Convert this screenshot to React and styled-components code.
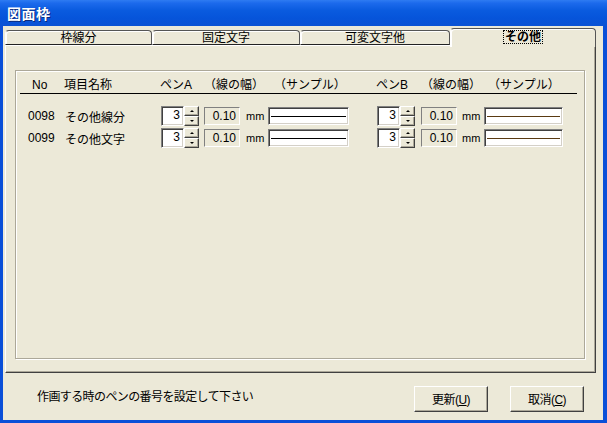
import React from 'react';
import styled, { createGlobalStyle } from 'styled-components';

const GlobalStyle = createGlobalStyle`
  html, body {
    margin: 0;
    padding: 0;
    background: #ECE9D8;
  }
  body {
    font-family: "Liberation Sans", "Noto Sans CJK JP", sans-serif;
    font-size: 12px;
    color: #000;
  }
`;

const FACE = '#ECE9D8';

const Window = styled.div`
  width: 607px;
  height: 423px;
  box-sizing: border-box;
  display: flex;
  flex-direction: column;
  background: #0A4FD8;
  padding: 0 4px 3px 3px;
  overflow: hidden;
`;

const TitleBar = styled.div`
  height: 26px;
  margin: 0 -4px 0 -3px;
  display: flex;
  align-items: center;
  padding-left: 7px;
  background: linear-gradient(#2E7BF2 0%, #1C6AEC 12%, #0A5BDF 40%, #0654DA 70%, #0A52D4 100%);
  color: #fff;
  font-weight: bold;
  font-size: 14px;
  letter-spacing: 0.5px;
  text-shadow: 1px 1px 0 #0A2A7A;
`;

const Body = styled.div`
  flex: 1;
  display: flex;
  flex-direction: column;
  background: ${FACE};
  padding: 2px 7px 0 2px;
`;

/* タブ */
const TabStrip = styled.div`
  display: flex;
  height: 17px;
  align-items: flex-end;
  position: relative;
  z-index: 1;
`;

const Tab = styled.div`
  flex: ${(p) => p.$w};
  box-sizing: border-box;
  height: ${(p) => (p.$active ? '19px' : '15px')};
  margin-bottom: ${(p) => (p.$active ? '-2px' : '0')};
  display: flex;
  align-items: center;
  justify-content: center;
  background: ${FACE};
  border-top: 1px solid #555;
  border-left: 1px solid #fff;
  border-right: 1px solid #555;
  border-bottom: ${(p) => (p.$active ? 'none' : '1px solid #222')};
  border-radius: 4px 4px 0 0;
  box-shadow: inset 1px 1px 0 #fff;
  font-weight: ${(p) => (p.$active ? 'bold' : 'normal')};
  line-height: 12px;
  white-space: nowrap;
`;

const FocusLabel = styled.span`
  outline: 1px dotted #000;
  outline-offset: 0;
  padding: 0 1px;
  margin-top: -3px;
`;

const Panel = styled.div`
  height: 328px;
  box-sizing: border-box;
  border-top: 1px solid #fff;
  border-left: 1px solid #fff;
  border-right: 1px solid #404040;
  border-bottom: 1px solid #404040;
  box-shadow: inset -1px -1px 0 #ACA899;
  padding: 24px 10px 13px 9px;
  display: flex;
`;

const GroupBox = styled.div`
  flex: 1;
  border: 1px solid #ACA899;
  box-shadow: inset 1px 1px 0 #fff, 1px 1px 0 #fff;
  padding: 7px 7px 0 4px;
`;

const Grid = styled.div`
  display: grid;
  grid-template-columns: 45px 96px 43px 41px 23px 109px 44px 40px 23px 79px;
  align-items: center;
`;

const HeadCell = styled.div`
  grid-column: ${(p) => p.$col};
  padding-left: ${(p) => p.$off || 0}px;
  margin-left: ${(p) => p.$neg || 0}px;
  white-space: nowrap;
  height: 15px;
  line-height: 15px;
`;

const HeadRule = styled.div`
  grid-column: 1 / -1;
  height: 0;
  border-top: 1px solid #000;
  margin-right: -14px;
  margin-bottom: 11px;
`;

const Cell = styled.div`
  padding-left: ${(p) => p.$off || 0}px;
  white-space: nowrap;
  height: 22px;
  display: flex;
  align-items: center;
`;

const SpinWrap = styled.div`
  display: flex;
  height: 20px;
`;

const SpinInput = styled.div`
  width: 23px;
  height: 20px;
  box-sizing: border-box;
  background: #fff;
  border-top: 1px solid #808080;
  border-left: 1px solid #808080;
  border-right: 1px solid #fff;
  border-bottom: 1px solid #fff;
  box-shadow: inset 1px 1px 0 #404040, inset -1px -1px 0 #D4D0C8;
  text-align: right;
  padding: 1px 3px 0 0;
  line-height: 15px;
`;

const SpinButtons = styled.div`
  width: 15px;
  display: flex;
  flex-direction: column;
`;

const SpinBtn = styled.div`
  height: 10px;
  box-sizing: border-box;
  background: ${FACE};
  border-top: 1px solid #fff;
  border-left: 1px solid #fff;
  border-right: 1px solid #404040;
  border-bottom: 1px solid #404040;
  box-shadow: inset -1px -1px 0 #ACA899;
  display: flex;
  align-items: center;
  justify-content: center;

  &::after {
    content: '';
    width: 0;
    height: 0;
    border-left: 2px solid transparent;
    border-right: 2px solid transparent;
    ${(p) => (p.$up ? 'border-bottom: 2px solid #000;' : 'border-top: 2px solid #000;')}
  }
`;

const ReadBox = styled.div`
  width: 36px;
  height: 18px;
  box-sizing: border-box;
  background: ${FACE};
  border-top: 1px solid #808080;
  border-left: 1px solid #808080;
  border-right: 1px solid #fff;
  border-bottom: 1px solid #fff;
  text-align: right;
  padding-right: 3px;
  line-height: 16px;
`;

const Unit = styled.span`
  font-size: 11px;
  padding-left: 1px;
`;

const Sample = styled.div`
  width: ${(p) => p.$w}px;
  height: 18px;
  box-sizing: border-box;
  background: #fff;
  border-top: 1px solid #808080;
  border-left: 1px solid #808080;
  border-right: 1px solid #fff;
  border-bottom: 1px solid #fff;
  box-shadow: inset 1px 1px 0 #404040, inset -1px -1px 0 #D4D0C8;
  display: flex;
  align-items: center;
  padding: 0 2px 0 2px;

  &::before {
    content: '';
    flex: 1;
    height: 1px;
    background: ${(p) => p.$color};
  }
`;

/* 下部 */
const Footer = styled.div`
  flex: 1;
  display: flex;
  align-items: center;
  padding: 4px 12px 0 32px;
`;

const Status = styled.div`
  flex: 1;
  letter-spacing: -0.6px;
  padding-bottom: 7px;
`;

const Button = styled.button`
  width: 74px;
  height: 26px;
  margin-left: ${(p) => p.$gap || 0}px;
  background: ${FACE};
  font-family: inherit;
  font-size: 12px;
  color: #000;
  border-top: 1px solid #fff;
  border-left: 1px solid #fff;
  border-right: 1px solid #404040;
  border-bottom: 1px solid #404040;
  box-shadow: inset -1px -1px 0 #ACA899;
  padding: 0;
  letter-spacing: -0.5px;

  u {
    text-decoration: underline;
  }
`;

const Spin = ({ value }) => (
  <SpinWrap>
    <SpinInput>{value}</SpinInput>
    <SpinButtons>
      <SpinBtn $up />
      <SpinBtn />
    </SpinButtons>
  </SpinWrap>
);

const rows = [
  { no: '0098', name: 'その他線分' },
  { no: '0099', name: 'その他文字' },
];

const tabs = [
  { label: '枠線分', w: 147 },
  { label: '固定文字', w: 148 },
  { label: '可変文字他', w: 150 },
  { label: 'その他', w: 146, active: true },
];

const App = () => (
  <>
    <GlobalStyle />
    <Window>
      <TitleBar>図面枠</TitleBar>
      <Body>
        <TabStrip>
          {tabs.map((t) => (
            <Tab key={t.label} $w={t.w} $active={t.active}>
              {t.active ? <FocusLabel>{t.label}</FocusLabel> : t.label}
            </Tab>
          ))}
        </TabStrip>
        <Panel>
          <GroupBox>
            <Grid>
              <HeadCell $col={1} $off={12}>No</HeadCell>
              <HeadCell $col={2} $neg={-1}>項目名称</HeadCell>
              <HeadCell $col={3} $neg={-1}>ペンA</HeadCell>
              <HeadCell $col="4 / 6">（線の幅）</HeadCell>
              <HeadCell $col={6} $off={6}>（サンプル）</HeadCell>
              <HeadCell $col={7} $neg={-1}>ペンB</HeadCell>
              <HeadCell $col="8 / 10">（線の幅）</HeadCell>
              <HeadCell $col={10} $off={4}>（サンプル）</HeadCell>
              <HeadRule />
              {rows.map((r) => (
                <React.Fragment key={r.no}>
                  <Cell $off={8}>{r.no}</Cell>
                  <Cell>{r.name}</Cell>
                  <Cell><Spin value="3" /></Cell>
                  <Cell><ReadBox>0.10</ReadBox></Cell>
                  <Cell><Unit>mm</Unit></Cell>
                  <Cell><Sample $w={81} $color="#000" /></Cell>
                  <Cell><Spin value="3" /></Cell>
                  <Cell><ReadBox>0.10</ReadBox></Cell>
                  <Cell><Unit>mm</Unit></Cell>
                  <Cell><Sample $w={79} $color="#5A3A12" /></Cell>
                </React.Fragment>
              ))}
            </Grid>
          </GroupBox>
        </Panel>
        <Footer>
          <Status>作画する時のペンの番号を設定して下さい</Status>
          <Button>更新(<u>U</u>)</Button>
          <Button $gap={22}>取消(<u>C</u>)</Button>
        </Footer>
      </Body>
    </Window>
  </>
);

export default App;
